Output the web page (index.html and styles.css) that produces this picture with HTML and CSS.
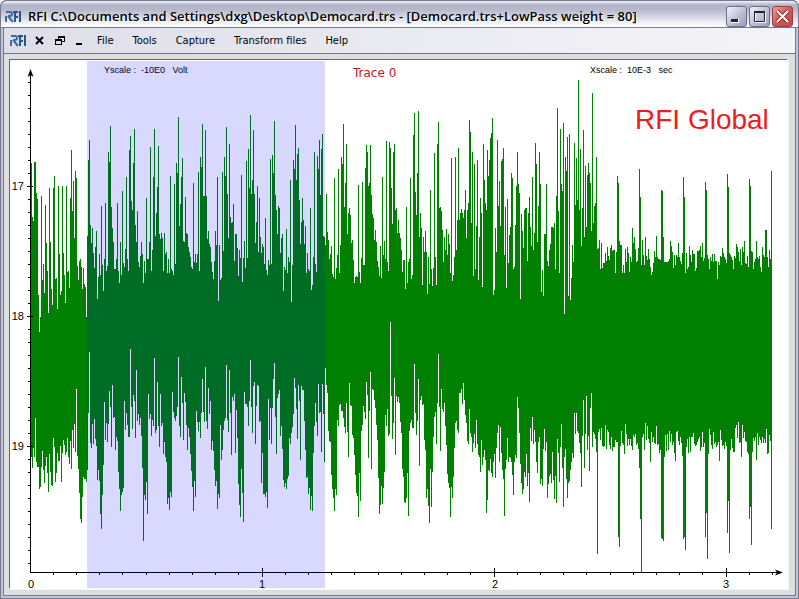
FILE: index.html
```html
<!DOCTYPE html>
<html lang="en">
<head>
<meta charset="utf-8">
<title>RFI C:\Documents and Settings\dxg\Desktop\Democard.trs</title>
<link rel="stylesheet" href="styles.css">
</head>
<body>
<div class="window">
  <header class="titlebar">
    <svg class="logo" viewBox="0 0 17 13" width="17" height="13" aria-hidden="true"><g fill="none" stroke-width="2"><path stroke="#3d6c9e" d="M1 2h4q2 0 2 2t-2 2H3M3 6l5 6M1 6v6"/><path stroke="#285688" d="M8 2h5M10 2v10M10 7h3M15 1v11"/></g></svg>
    <h1 class="title">RFI C:\Documents and Settings\dxg\Desktop\Democard.trs - [Democard.trs+LowPass weight = 80]</h1>
    <div class="controls">
      <button class="control" aria-label="Minimize"><svg viewBox="0 0 19 19"><path fill="#fff" d="M4 12h8v4H4z"/><path fill="#223" d="M4 12h7v3H4z"/></svg></button>
      <button class="control" aria-label="Maximize"><svg viewBox="0 0 19 19"><path fill="none" stroke="#fff" d="M5.500 5.500h10v10h-10z"/><path fill="none" stroke="#223" d="M4.500 5.500h10v9h-10z"/><path fill="#223" d="M4 4h11v2H4z"/></svg></button>
      <button class="control close" aria-label="Close"><svg viewBox="0 0 19 19"><path fill="none" stroke="#8d3535" stroke-width="4" d="M4 4l11 11M15 4L4 15"/><path fill="none" stroke="#fff" stroke-width="2" d="M4 4l11 11M15 4L4 15"/></svg></button>
    </div>
  </header>
  <nav class="menubar">
    <svg class="logo" viewBox="0 0 17 13" width="17" height="13" aria-hidden="true"><g fill="none" stroke-width="2"><path stroke="#3d6c9e" d="M1 2h4q2 0 2 2t-2 2H3M3 6l5 6M1 6v6"/><path stroke="#285688" d="M8 2h5M10 2v10M10 7h3M15 1v11"/></g></svg>
    <button class="mdi" aria-label="Close document"><svg viewBox="0 0 10 10"><path stroke="#000" stroke-width="2" d="M1 1l7 7M8 1L1 8"/></svg></button>
    <button class="mdi" aria-label="Restore document"><svg viewBox="0 0 10 10" shape-rendering="crispEdges"><path d="M3 0h7v6H7v3H0V3h3zM4 2v1h3v2h2V2zM1 5v3h5V5z" fill-rule="evenodd"/></svg></button>
    <button class="mdi" aria-label="Minimize document"><svg viewBox="0 0 10 10" shape-rendering="crispEdges"><path d="M1 7h6v2H1z"/></svg></button>
    <div class="menus">
      <button class="menu">File</button>
      <button class="menu">Tools</button>
      <button class="menu">Capture</button>
      <button class="menu">Transform files</button>
      <button class="menu">Help</button>
    </div>
  </nav>
  <main class="client">
    <svg class="chart" viewBox="10 60 778 529" role="img" aria-label="Trace 0">
      <path id="trace" class="trace"/>
      <g class="axes">
        <path id="ticks" class="line"/>
        <path class="line" d="M30 72h1v501h-1zM30 572h750v1H30z"/>
        <path d="M30.500 69l3 8-3-2-3 2zM783 572.500l-8-3 2 3-2 3z"/>
      </g>
      <g class="axis-label" text-anchor="end">
        <text x="24" y="190">17</text>
        <text x="24" y="320">18</text>
        <text x="24" y="450">19</text>
      </g>
      <g class="axis-label" text-anchor="middle">
        <text x="31" y="588">0</text>
        <text x="262" y="588">1</text>
        <text x="495" y="588">2</text>
        <text x="726" y="588">3</text>
      </g>
      <text class="scale-label" x="104" y="73">Yscale :&#160; -10E0&#160;&#160; Volt</text>
      <text class="scale-label" x="590" y="73">Xscale :&#160; 10E-3&#160;&#160; sec</text>
      <text class="trace-name" x="353" y="77">Trace 0</text>
      <text class="brand" x="635" y="129">RFI Global</text>
      <rect class="selection" x="87" y="61" width="238" height="527"/>
    </svg>
  </main>
</div>
<script src="script.js"></script>
</body>
</html>
```
FILE: styles.css
```css
* { box-sizing: border-box; }

body {
  margin: 0;
  background: #fff;
  font-family: "DejaVu Sans Condensed", "DejaVu Sans", sans-serif;
  color: #000;
}

button {
  padding: 0;
  border: 0;
  background: none;
  font: inherit;
  color: inherit;
}

.window {
  display: flex;
  flex-direction: column;
  min-height: 100vh;
  padding: 0 4px 4px;
  border-radius: 7px 7px 0 0;
  background: #b9b9d0;
  box-shadow: inset 0 0 0 1px #77778f, inset 0 0 0 3px #c4c4d8, inset 0 0 0 4px #77778f;
}

.titlebar {
  display: flex;
  align-items: center;
  height: 28px;
  margin: 0 -4px;
  padding: 4px 5px 0 4px;
  border: 1px solid #77778f;
  border-radius: 7px 7px 0 0;
  background: linear-gradient(#f4f4fa 0, #b2b2c8 4px, #b9b9cd 9px, #d6d6e2 16px, #fff 25px);
}

.title {
  flex: 1;
  margin: 0 0 0 6px;
  overflow: hidden;
  font: 600 13px/18px "Open Sans", sans-serif;
  white-space: nowrap;
  text-shadow: 1px 1px 1px #fff;
}

.logo { flex: none; }

.controls { display: flex; gap: 2px; }

.control {
  width: 21px;
  height: 21px;
  border: 1px solid #6d7090;
  border-radius: 3px;
  background: linear-gradient(135deg, #f2f2fa, #b9bad0 60%, #9c9db9);
}

.control svg { display: block; width: 19px; height: 19px; }

.close {
  border-color: #9a3d47;
  background: linear-gradient(135deg, #f0a0a0, #d95353 50%, #c94747);
}

.menubar {
  display: flex;
  align-items: center;
  height: 26px;
  padding: 0 6px;
  border-bottom: 1px solid #77777f;
  background: linear-gradient(90deg, #dedeea, #f5f5f8);
}

.mdi { width: 10px; height: 10px; margin-left: 8px; }
.mdi + .mdi { margin-left: 10px; }
.mdi svg { display: block; width: 10px; height: 10px; }

.menus { display: flex; gap: 19px; margin-left: 12px; }

.menu { font-size: 11px; line-height: 16px; }

.client {
  flex: 1;
  padding: 6px 7px 6px 6px;
  background: #dedede;
}

.chart {
  display: block;
  width: 100%;
  height: auto;
  background: #fff;
  box-shadow: -1px -1px 0 #66666a, 1px 1px 0 #f7f7f7;
}

.trace { fill: #008000; shape-rendering: crispEdges; }
.line { shape-rendering: crispEdges; }
.selection { fill: #00f; fill-opacity: .15; shape-rendering: crispEdges; }
.axis-label { font: 11px "Liberation Sans", sans-serif; }
.scale-label { font: 9px "Liberation Sans", sans-serif; }
.trace-name { font: 12px "DejaVu Sans", sans-serif; fill: #c8141c; }
.brand { font: 28px "Liberation Sans", sans-serif; fill: #ee1c1c; }
```
FILE: script.js
```js
// Upper and lower envelope of the trace, one sample per column.
const FIRST = 31;

const upper = `
163 217 221 162 162 193 199 295 332
317 196 280 264 293 205 243 271 313 188
242 289 305 188 176 279 278 309 186 254
295 291 186 253 275 303 186 272 271 288
198 150 211 181 238 171 178 266 280 261
259 267 289 268 284 287 317 236 160 140
225 243 228 253 268 247 231 299 277 254
275 206 265 291 259 203 271 266 152 162
126 207 228 242 269 269 259 203 271 283
242 275 191 263 267 249 177 259 271 150
136 201 210 163 129 225 242 211 262 267
256 242 254 283 261 273 198 259 259 242
147 271 250 177 129 236 213 187 146 234
239 233 238 271 233 254 252 273 259 273
176 269 271 275 184 264 163 173 117 226
204 177 158 241 242 197 233 234 247 252
257 267 269 183 262 254 263 254 172 271
157 167 124 196 196 130 196 239 231 244
247 262 272 279 261 231 245 177 301 245
280 278 172 251 157 176 127 194 238 144
217 223 222 204 261 234 234 248 276 250
258 175 282 258 241 268 161 258 149 188
115 194 180 130 194 243 222 186 252 198
237 253 244 247 264 218 270 275 260 265
159 264 155 173 121 195 210 234 206 208
253 238 234 291 267 270 229 273 257 262
180 302 265 160 169 125 180 154 148 200
244 222 198 220 244 226 273 253 269 271
208 290 285 257 152 264 272 156 169 140
195 149 134 236 237 245 194 232 240 259
254 246 274 277 178 279 268 255 169 273
245 157 164 124 207 183 144 234 213 208
215 243 240 260 283 277 276 277 185 272
283 258 182 265 265 168 145 152 186 183
145 195 214 218 240 230 242 261 267 276
246 278 177 255 241 259 141 262 271 142
148 188 224 152 144 210 208 233 220 233
238 250 272 260 260 289 207 283 262 259
178 279 275 135 113 192 215 173 111 237
213 228 285 237 252 231 252 294 257 284
190 269 286 268 153 257 285 144 122 208
207 211 230 262 237 250 229 255 234 244
273 158 281 275 257 157 250 220 148 220
213 209 213 218 210 190 238 210 203 120
132 223 152 276 164 269 226 160 280 237
198 213 287 144 180 203 210 150 176 160
138 133 118 295 290 228 252 140 206 181
226 161 159 148 255 207 288 199 263 235
227 173 178 269 267 225 186 152 184 193
299 214 231 248 210 208 208 261 213 197
227 246 177 250 233 143 164 242 206 152
184 292 270 296 234 234 184 261 266 250
244 227 227 228 223 269 196 108 211 273
129 184 191 123 314 157 171 137 296 134
300 278 245 262 143 205 158 200 80 210
149 246 208 130 237 166 227 175 163 173
183 231 93 223 206 203 157 249 248 240
269 243 268 263 263 253 261 247 256 260
248 245 251 250 250 273 252 176 183 241
245 245 273 265 273 249 262 247 253 272
257 262 228 243 237 249 262 261 248 169
197 265 240 255 265 237 256 260 249 259
267 275 272 263 251 257 236 257 259 259
260 190 191 237 262 262 262 262 261 259
241 246 252 268 255 265 255 257 243 257
261 264 253 177 197 273 253 269 267 246
255 262 250 254 254 271 268 251 251 250
246 257 243 261 258 182 190 255 259 269
257 261 254 262 254 261 261 279 262 265
256 257 248 253 257 259 263 174 187 253
255 257 260 269 256 258 244 247 252 261
249 265 247 252 241 263 264 256 267 179
186 251 252 269 262 259 241 257 259 256
267 272 247 255 257 230 230 257 267 250
259 171`;

const lower = `
457 468 448 457 418 462 467 467 489
487 467 451 470 483 466 457 473 492 454
472 485 486 438 447 482 473 453 461 461
446 482 453 440 445 455 452 438 457 464
441 469 430 448 424 452 389 456 469 493
519 523 497 477 479 479 482 470 413 352
443 448 424 444 419 439 446 480 470 481
514 529 495 465 402 440 423 442 424 391
407 447 385 418 417 450 437 441 472 489
511 495 492 488 401 430 413 425 437 437
349 407 429 395 401 438 370 421 414 425
418 436 468 541 495 500 482 514 394 419
414 436 420 426 358 433 430 382 426 447
394 426 423 454 442 457 462 504 498 510
492 497 392 412 418 421 416 407 357 426
437 377 403 440 393 402 425 450 428 437
454 471 487 511 481 497 411 422 431 422
438 413 379 412 422 367 421 429 388 414
401 450 441 451 470 486 481 509 494 498
425 460 450 430 421 418 365 420 432 370
413 455 397 401 394 453 410 438 484 505
517 469 493 522 392 404 404 407 426 401
360 407 433 386 382 444 406 385 386 422
421 483 453 494 494 497 492 508 399 440
408 444 408 379 363 417 454 398 394 390
436 426 449 480 487 483 489 479 476 438
444 433 427 414 378 388 409 439 385 401
460 386 390 390 421 450 478 477 494 488
510 496 511 453 426 403 422 436 384 413
412 452 384 414 462 368 385 393 431 441
442 475 489 498 511 489 495 420 426 405
404 411 411 418 427 433 403 432 457 383
405 406 435 438 455 475 493 496 517 473
501 431 425 406 412 419 382 395 458 411
372 469 389 390 400 408 425 440 478 514
505 486 504 488 472 415 426 409 436 434
322 396 439 423 378 455 396 402 397 403
422 433 469 477 502 503 498 473 516 431
423 420 428 428 364 413 435 421 379 466
400 396 405 404 440 450 498 489 506 523
469 507 472 437 417 412 444 403 354 407
451 389 409 412 403 426 445 474 483 488
517 487 498 477 448 423 421 430 433 393
393 389 404 383 400 415 423 441 444 409
433 437 452 443 434 448 420 444 455 457
472 440 465 457 450 460 513 500 470 471
459 473 477 462 454 478 448 433 425 462
427 453 470 479 516 469 460 438 462 457
458 462 475 495 462 455 458 397 408 433
464 483 494 489 472 477 454 486 473 502
428 441 417 444 430 442 462 473 442 437
484 479 486 449 429 451 442 498 484 476
474 483 452 480 499 476 503 439 453 482
447 424 468 507 457 449 479 498 483 481
470 462 453 458 413 434 413 431 433 443
453 487 436 400 468 434 396 450 436 471
408 393 447 432 434 439 452 554 432 429
440 428 446 447 446 425 449 430 432 445
449 437 451 447 447 440 442 442 537 547
446 431 443 445 454 424 434 446 439 445
439 446 450 435 437 434 445 443 449 468
519 572 437 434 450 423 440 426 439 443
462 432 442 437 443 444 426 445 444 453
450 538 539 541 457 435 451 434 450 431
442 434 445 442 453 461 432 431 441 445
437 443 456 539 537 550 447 439 453 437
452 437 437 433 444 446 445 442 439 437
451 447 432 447 443 537 513 559 454 429
435 445 449 432 444 442 447 445 442 461
430 440 446 445 449 442 446 533 501 553
450 439 448 452 452 428 425 438 422 443
442 457 425 438 432 441 442 452 454 519
507 545 452 438 441 437 460 433 445 437
440 443 437 443 439 443 429 454 453 435
441 529`;

const parse = (text) => text.trim().split(/\s+/).map(Number);
const tops = parse(upper);
const bottoms = parse(lower);
const trace = tops
  .map((top, i) => `M${FIRST + i} ${top}h1V${bottoms[i]}h-1z`)
  .join('');
document.getElementById('trace').setAttribute('d', trace);

// Ten minor ticks for each major one on both axes.
let ticks = '';
for (let k = -8; k <= 29; k++) {
  const y = 186 + 13 * k;
  const major = k % 10 === 0;
  ticks += major ? `M27 ${y}h6v1h-6z` : `M28 ${y}h2v1h-2z`;
}
for (let k = 1; k <= 32; k++) {
  const x = Math.floor(30 + 23.2 * k);
  ticks += k % 10 === 0 ? `M${x} 568h1v9h-1z` : `M${x} 573h1v2h-1z`;
}
document.getElementById('ticks').setAttribute('d', ticks);
```
